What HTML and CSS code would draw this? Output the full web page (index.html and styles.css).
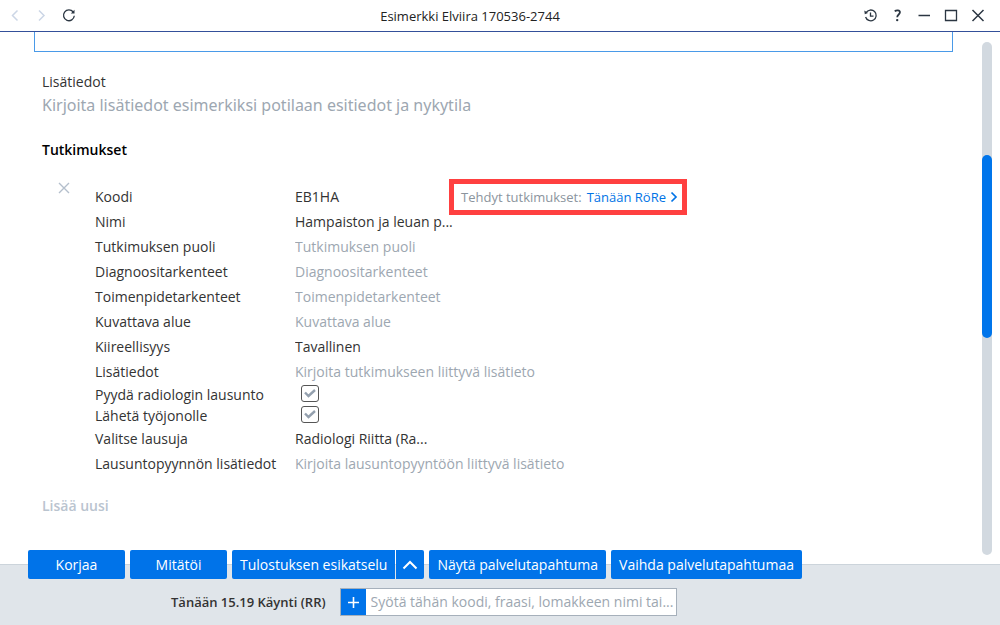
FILE: index.html
```html
<!DOCTYPE html>
<html lang="fi">
<head>
    <meta charset="UTF-8">
    <meta name="viewport" content="width=device-width, initial-scale=1.0">
    <title>Esimerkki Elviira 170536-2744</title>
    <link rel="stylesheet" href="styles.css">
</head>
<body>
    <header class="titlebar">
        <nav class="titlebar-group">
            <button type="button" class="icon-btn faded" aria-label="Takaisin">
                <svg width="15" height="15" viewBox="0 0 15 15"><path class="medium" d="M9.500 2.500L4.500 7.500L9.500 12.500"/></svg>
            </button>
            <button type="button" class="icon-btn faded" aria-label="Eteenpäin">
                <svg width="15" height="15" viewBox="0 0 15 15"><path class="medium" d="M4 2.500L9 7.500L4 12.500"/></svg>
            </button>
            <button type="button" class="icon-btn" aria-label="Päivitä">
                <svg width="15" height="15" viewBox="0 0 15 15"><path d="M11.200 4A5.400 5.400 0 1 0 12.300 7.800"/><path class="solid" d="M12.500 1.800V5.400H8.800z"/></svg>
            </button>
        </nav>
        <h1 class="title">Esimerkki Elviira 170536-2744</h1>
        <div class="titlebar-group">
            <button type="button" class="icon-btn" aria-label="Historia">
                <svg width="15" height="15" viewBox="0 0 15 15"><path d="M3.100 4.700A5.400 5.400 0 1 1 2.600 9"/><path d="M7.500 4.500V8.200H10.500"/><path class="solid" d="M1.300 2.600L1.800 6.200L5 5z"/></svg>
            </button>
            <button type="button" class="icon-btn" aria-label="Ohje">
                <svg width="15" height="15" viewBox="0 0 15 15"><path class="thick" d="M4.800 3.400C6 2 10.100 1.600 9.900 4.500C9.800 6.400 7.200 6.700 7.200 9.200"/><circle class="solid" cx="7.200" cy="12.100" r="1.200"/></svg>
            </button>
            <button type="button" class="icon-btn" aria-label="Pienennä">
                <svg width="15" height="15" viewBox="0 0 15 15"><path class="medium" d="M1.500 7.500H13"/></svg>
            </button>
            <button type="button" class="icon-btn" aria-label="Suurenna">
                <svg width="15" height="15" viewBox="0 0 15 15"><path d="M1.500 2.500H12.500V12.500H1.500z"/></svg>
            </button>
            <button type="button" class="icon-btn" aria-label="Sulje">
                <svg width="15" height="15" viewBox="0 0 15 15"><path class="medium" d="M1.500 2L12.500 13M12.500 2L1.500 13"/></svg>
            </button>
        </div>
    </header>

    <div class="workspace">
        <main class="form">
            <textarea class="previous-text" aria-label="Lähetteen teksti"></textarea>

            <div class="details">
                <label for="details">Lisätiedot</label>
                <input type="text" id="details" placeholder="Kirjoita lisätiedot esimerkiksi potilaan esitiedot ja nykytila">
            </div>

            <h2 class="section-title">Tutkimukset</h2>

            <section class="study">
                <button type="button" class="remove" aria-label="Poista tutkimus">
                    <svg width="12" height="12" viewBox="0 0 12 12"><path d="M1 1L11 11M11 1L1 11"/></svg>
                </button>
                <div class="rows">
                    <div class="row">
                        <label for="code">Koodi</label>
                        <input type="text" id="code" class="short" value="EB1HA">
                        <div class="done-studies">
                            <span>Tehdyt tutkimukset:</span>
                            <a href="#">Tänään RöRe
                                <svg width="8" height="12" viewBox="0 0 8 12"><path d="M1.500 1.500L6 6L1.500 10.500"/></svg>
                            </a>
                        </div>
                    </div>
                    <div class="row">
                        <label for="name">Nimi</label>
                        <input type="text" id="name" value="Hampaiston ja leuan p...">
                    </div>
                    <div class="row">
                        <label for="side">Tutkimuksen puoli</label>
                        <input type="text" id="side" placeholder="Tutkimuksen puoli">
                    </div>
                    <div class="row">
                        <label for="diagnosis">Diagnoositarkenteet</label>
                        <input type="text" id="diagnosis" placeholder="Diagnoositarkenteet">
                    </div>
                    <div class="row">
                        <label for="procedure">Toimenpidetarkenteet</label>
                        <input type="text" id="procedure" placeholder="Toimenpidetarkenteet">
                    </div>
                    <div class="row">
                        <label for="area">Kuvattava alue</label>
                        <input type="text" id="area" placeholder="Kuvattava alue">
                    </div>
                    <div class="row">
                        <label for="urgency">Kiireellisyys</label>
                        <input type="text" id="urgency" value="Tavallinen">
                    </div>
                    <div class="row">
                        <label for="study-info">Lisätiedot</label>
                        <input type="text" id="study-info" placeholder="Kirjoita tutkimukseen liittyvä lisätieto">
                    </div>
                    <div class="row tick-row">
                        <label for="statement">Pyydä radiologin lausunto</label>
                        <span class="tick">
                            <input type="checkbox" id="statement" checked>
                            <svg width="12" height="9" viewBox="0 0 12 9"><path d="M1 3.500L4.500 7L11 1"/></svg>
                        </span>
                    </div>
                    <div class="row tick-row">
                        <label for="worklist">Lähetä työjonolle</label>
                        <span class="tick">
                            <input type="checkbox" id="worklist" checked>
                            <svg width="12" height="9" viewBox="0 0 12 9"><path d="M1 3.500L4.500 7L11 1"/></svg>
                        </span>
                    </div>
                    <div class="row">
                        <label for="radiologist">Valitse lausuja</label>
                        <input type="text" id="radiologist" value="Radiologi Riitta (Ra...">
                    </div>
                    <div class="row">
                        <label for="statement-info">Lausuntopyynnön lisätiedot</label>
                        <input type="text" id="statement-info" placeholder="Kirjoita lausuntopyyntöön liittyvä lisätieto">
                    </div>
                </div>
            </section>

            <button type="button" class="add-new">Lisää uusi</button>
        </main>
        <div class="scrollbar">
            <div class="thumb"></div>
        </div>
    </div>

    <footer class="footer">
        <div class="actions">
            <button type="button" class="btn narrow">Korjaa</button>
            <button type="button" class="btn narrow">Mitätöi</button>
            <div class="split">
                <button type="button" class="btn">Tulostuksen esikatselu</button>
                <button type="button" class="btn arrow" aria-label="Lisää tulostusvaihtoehtoja">
                    <svg width="16" height="10" viewBox="0 0 16 10"><path d="M1.500 8.500L8 2L14.500 8.500"/></svg>
                </button>
            </div>
            <button type="button" class="btn">Näytä palvelutapahtuma</button>
            <button type="button" class="btn">Vaihda palvelutapahtumaa</button>
        </div>
        <div class="entry">
            <label for="entry">Tänään 15.19 Käynti (RR)</label>
            <div class="entry-field">
                <button type="button" class="plus" aria-label="Lisää">
                    <svg width="13" height="13" viewBox="0 0 13 13"><path d="M6.500 1V12M1 6.500H12"/></svg>
                </button>
                <input type="text" id="entry" placeholder="Syötä tähän koodi, fraasi, lomakkeen nimi tai...">
            </div>
        </div>
    </footer>
</body>
</html>
```

FILE: styles.css
```css
* {
    box-sizing: border-box;
}
body {
    display: flex;
    flex-direction: column;
    height: 100vh;
    margin: 0;
    background-color: #fff;
    color: #333;
    font-family: "Open Sans", "Noto Sans", sans-serif;
    font-size: 14px;
    line-height: 20px;
}
button, input, textarea {
    margin: 0;
    padding: 0;
    border: none;
    background: none;
    color: inherit;
    font: inherit;
}
button {
    cursor: pointer;
}
svg {
    display: block;
    fill: none;
    stroke: currentColor;
}
input::placeholder {
    color: #9da7b1;
    opacity: 1;
}

/* Title bar */
.titlebar {
    display: flex;
    align-items: center;
    height: 32px;
    padding: 0 14px 0 8px;
    border-bottom: 1px solid #34509a;
    flex: none;
}
.titlebar-group {
    display: flex;
    gap: 12px;
    color: #2b3642;
}
.icon-btn {
    width: 15px;
    height: 15px;
}
.faded {
    color: #ccd6e6;
}
.icon-btn svg {
    stroke-width: 1.3;
}
.icon-btn .medium {
    stroke-width: 1.5;
}
.icon-btn .thick {
    stroke-width: 1.8;
}
.icon-btn .solid {
    fill: currentColor;
    stroke: none;
}
.title {
    flex: 1;
    margin: 0;
    color: #222;
    font-size: 13px;
    font-weight: normal;
    text-align: center;
}

/* Form */
.workspace {
    display: flex;
    flex: 1;
    min-height: 0;
    padding: 0 8px 0 34px;
    overflow: hidden;
}
.form {
    flex: 1;
}
.previous-text {
    display: block;
    width: 100%;
    height: 20px;
    border: 1px solid #4a9ae8;
    border-top: none;
    resize: none;
}
.details {
    display: flex;
    flex-direction: column;
    padding: 20px 8px 0;
}
.details input {
    height: 26px;
    font-family: "Noto Sans", sans-serif;
    font-size: 16px;
}
.section-title {
    margin: 22px 8px 0;
    color: #000;
    font-size: 14px;
    font-weight: 600;
}
.study {
    display: flex;
    gap: 25px;
    margin: 22px 24px 0;
}
.remove {
    align-self: flex-start;
    height: 12px;
    color: #b4bfcc;
}
.remove svg {
    stroke-width: 1.4;
}
.rows {
    flex: 1;
    padding-top: 2px;
}
.row {
    display: flex;
    align-items: center;
    height: 25px;
}
.row label {
    width: 200px;
    flex: none;
}
.row input[type="text"] {
    flex: 1;
    min-width: 0;
    height: 24px;
}
.row input.short {
    flex: none;
    width: 154px;
}
.tick-row {
    height: 21px;
}
.tick {
    position: relative;
    margin: -2px 0 0 6px;
}
.tick input {
    display: block;
    width: 18px;
    height: 17px;
    border: 1px solid #555;
    border-radius: 3px;
    appearance: none;
}
.tick svg {
    position: absolute;
    top: 4px;
    left: 3px;
    color: #94a0ae;
    stroke-width: 2.4;
    pointer-events: none;
}
.done-studies {
    display: flex;
    align-items: center;
    gap: 5px;
    height: 36px;
    padding: 0 4px 0 7px;
    border: 5px solid #ff4040;
    color: #8b949d;
    font-size: 13px;
    white-space: nowrap;
}
.done-studies a {
    display: flex;
    align-items: center;
    gap: 4px;
    color: #0073e6;
    text-decoration: none;
}
.done-studies svg {
    stroke-width: 1.7;
}
.add-new {
    display: block;
    margin: 20px 8px 0;
    color: #bac4cf;
    font-weight: 600;
}
.scrollbar {
    width: 10px;
    margin: 10px 0 9px 29px;
    padding-top: 113px;
    border-radius: 5px;
    background-color: #d2d9e0;
}
.thumb {
    height: 183px;
    border-radius: 5px;
    background-color: #0075eb;
}

/* Footer */
.footer {
    flex: none;
    padding: 0 28px 9px;
    border-top: 1px solid #ccd4db;
    background-color: #e0e5ea;
}
.actions {
    display: flex;
    gap: 5px;
    margin-top: -15px;
}
.btn {
    height: 29px;
    padding: 0 8px;
    border-radius: 2px;
    background-color: #0073e9;
    color: #fff;
    white-space: nowrap;
}
.btn.narrow {
    width: 97px;
}
.split {
    display: flex;
    gap: 1px;
}
.split .btn:first-child {
    border-radius: 2px 0 0 2px;
}
.split .arrow {
    padding: 0 6px;
    border-radius: 0 2px 2px 0;
}
.arrow svg {
    stroke-width: 2;
}
.entry {
    display: flex;
    align-items: center;
    gap: 14px;
    margin: 9px 0 0 143px;
}
.entry label {
    font-size: 13px;
    font-weight: 600;
}
.entry-field {
    display: flex;
    width: 337px;
    height: 28px;
    border: 1px solid #a6b0bb;
    background-color: #fff;
}
.plus {
    display: flex;
    align-items: center;
    justify-content: center;
    width: 25px;
    flex: none;
    background-color: #0073e9;
    color: #fff;
}
.plus svg {
    stroke-width: 1.6;
}
.entry-field input {
    flex: 1;
    min-width: 0;
    padding: 0 0 0 5px;
}
```
